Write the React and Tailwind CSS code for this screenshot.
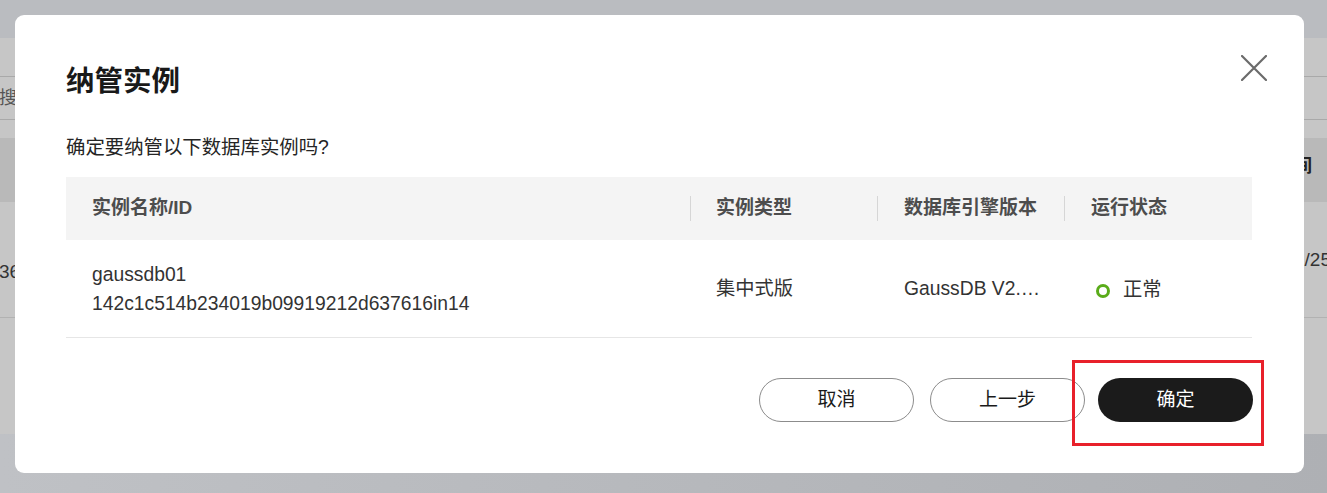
import React from "react";

const font = { fontFamily: '"Liberation Sans", "Noto Sans CJK SC", sans-serif' };

const App = () => {
  return (
    <div
      className="relative w-[1327px] h-[493px] overflow-hidden bg-[#b9bbbf]"
      style={font}
    >
      {/* Page behind the overlay */}
      <div className="flex flex-col h-full">
        <div className="h-[38px] shrink-0 bg-[#babcc0]" />
        <div className="flex flex-col bg-[#c6c6c6]">
          <div className="h-[39px] border-b border-[#a9a9a9]" />
          <div className="h-[43px] border-b border-[#a9a9a9] flex items-center text-[18px] text-[#555] -ml-[1px]">
            搜索
          </div>
          <div className="h-[18px]" />
          <div className="h-[64px] bg-[#b9b9b9] flex items-center justify-end text-[18px] font-bold text-[#222]">
            <span className="mr-[15px] mt-[-8px]">间</span>
          </div>
          <div className="h-[116px] border-b border-[#b2b2b2] flex justify-between text-[19px] text-[#333]">
            <span className="-ml-[1px] mt-[56px]">36</span>
            <span className="-mr-[4px] mt-[44px]">/25</span>
          </div>
          <div className="h-[116px]" />
        </div>
        <div className="flex-1 bg-gradient-to-r from-[#bfc1c5] to-[#aeb0b4]" />
      </div>

      {/* Dialog */}
      <div className="absolute left-[15px] top-[15px] w-[1289px] h-[458px] bg-white rounded-[9px] pt-[46px] px-[51px] pb-[51px] flex flex-col">
        <div className="flex items-start justify-between">
          <h2 className="text-[28.5px] leading-[40px] font-bold text-[#191919]">纳管实例</h2>
          <button type="button" className="mt-[-6px] mr-[-14px] text-[#6b6b6b]">
            <svg width="26" height="26" viewBox="0 0 26 26" fill="none">
              <path d="M1 1L25 25M25 1L1 25" stroke="currentColor" strokeWidth="2.2" strokeLinecap="round" />
            </svg>
          </button>
        </div>

        <p className="mt-[32px] text-[19.4px] leading-[28px] text-[#252525]">确定要纳管以下数据库实例吗?</p>

        {/* Table */}
        <div className="mt-[16px] w-[1186px]">
          <div className="grid grid-cols-[624px_187px_187px_188px] h-[63px] bg-[#f4f4f4] text-[19px] font-bold text-[#4d4d4d]">
            <div className="flex items-center pl-[26px]">实例名称/ID</div>
            <div className="flex items-center pl-[26px] relative">
              <span className="absolute left-0 top-[19px] h-[25px] w-px bg-[#d6d6d6]" />
              实例类型
            </div>
            <div className="flex items-center pl-[27px] relative">
              <span className="absolute left-0 top-[19px] h-[25px] w-px bg-[#d6d6d6]" />
              数据库引擎版本
            </div>
            <div className="flex items-center pl-[27px] relative">
              <span className="absolute left-0 top-[19px] h-[25px] w-px bg-[#d6d6d6]" />
              运行状态
            </div>
          </div>
          <div className="grid grid-cols-[624px_187px_187px_188px] h-[98px] border-b border-[#e6e6e6] text-[19.3px] text-[#333]">
            <div className="flex flex-col justify-center pl-[26px] leading-[29px]">
              <span>gaussdb01</span>
              <span>142c1c514b234019b09919212d637616in14</span>
            </div>
            <div className="flex items-center pl-[26px] pt-[2px]">集中式版</div>
            <div className="flex items-center pl-[27px] pr-[22px] pt-[2px] min-w-0">
              <span className="truncate">GaussDB V2.0-8.201</span>
            </div>
            <div className="flex items-center pl-[32px] pt-[4px]">
              <span className="w-[14px] h-[14px] rounded-full border-[3.5px] border-[#5aac1a] shrink-0" />
              <span className="ml-[13px]">正常</span>
            </div>
          </div>
        </div>

        {/* Footer buttons */}
        <div className="mt-[40px] flex justify-end">
          <button
            type="button"
            className="w-[155px] h-[44px] rounded-full border border-[#8c8c8c] text-[19px] text-[#1a1a1a] bg-white"
          >
            取消
          </button>
          <button
            type="button"
            className="ml-[16px] w-[155px] h-[44px] rounded-full border border-[#8c8c8c] text-[19px] text-[#1a1a1a] bg-white"
          >
            上一步
          </button>
          <div className="relative ml-[13px]">
            <button
              type="button"
              className="w-[155px] h-[44px] rounded-full bg-[#1b1b1b] text-[19px] text-white"
            >
              确定
            </button>
            {/* highlight box */}
            <span className="absolute left-[-26px] top-[-18px] w-[192px] h-[86px] border-[3px] border-[#e8202a] pointer-events-none" />
          </div>
        </div>
      </div>
    </div>
  );
};

export default App;
